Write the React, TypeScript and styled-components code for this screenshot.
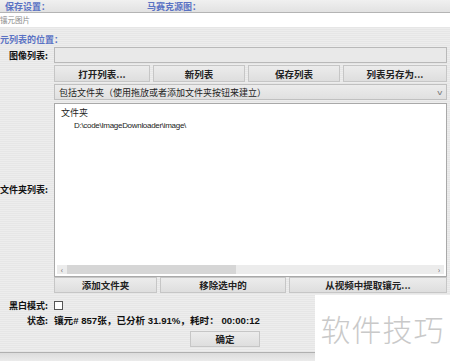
import React from 'react';
import styled, { createGlobalStyle } from 'styled-components';

const GlobalStyle = createGlobalStyle`
  html, body {
    margin: 0;
    padding: 0;
    width: 450px;
    height: 361px;
    overflow: hidden;
  }
  body {
    font-family: "Noto Sans CJK SC", "DejaVu Sans", sans-serif;
  }
  *, *::before, *::after {
    box-sizing: border-box;
  }
`;

const Page = styled.div`
  position: relative;
  width: 450px;
  height: 361px;
  display: flex;
  flex-direction: column;
  background: repeating-linear-gradient(#ededed 0 1px, #e6e6e6 1px 2px);
  overflow: hidden;

  & > * {
    flex-shrink: 0;
  }
`;

const TopBar = styled.div`
  height: 13px;
  display: flex;
  align-items: center;
  background: linear-gradient(#f0f0f0, #e2e2e2);
  border-bottom: 1px solid #b4b4b4;
`;

const BlueTitle = styled.span<{ $left?: number }>`
  color: #5a72c4;
  font-size: 9px;
  font-weight: 700;
  line-height: 11px;
  white-space: nowrap;
  margin-left: ${(p) => p.$left ?? 0}px;
`;

const WhiteBand = styled.div`
  height: 14px;
  background: #fff;
  display: flex;
  align-items: center;
`;

const Hint = styled.span`
  color: #8a8a8a;
  font-size: 7.5px;
  line-height: 10px;
  white-space: nowrap;
`;

const SectionRow = styled.div`
  height: 20px;
  display: flex;
  align-items: flex-end;
  padding-bottom: 2px;
`;

const Form = styled.div<{ $gap?: number; $top?: number }>`
  display: grid;
  grid-template-columns: 54px 1fr;
  padding-right: 3px;
  row-gap: ${(p) => p.$gap ?? 0}px;
  margin-top: ${(p) => p.$top ?? 0}px;
`;

const Label = styled.div`
  font-size: 9px;
  font-weight: 700;
  color: #111;
  padding-right: 6px;
  display: flex;
  align-items: center;
  justify-content: flex-end;
  white-space: nowrap;
`;

const Field = styled.div`
  height: 16px;
  background: #e9e9e9;
  border: 1px solid #b9b9b9;
`;

const ButtonRow = styled.div<{ $cols: string }>`
  display: grid;
  grid-template-columns: ${(p) => p.$cols};
  gap: 3px;
`;

const Button = styled.button<{ $h?: number }>`
  height: ${(p) => p.$h ?? 17}px;
  padding: 0;
  border: 1px solid #c6c6c6;
  background: linear-gradient(#ececec, #dedede);
  font-family: "Noto Sans CJK SC", sans-serif;
  font-size: 9.5px;
  font-weight: 700;
  color: #222;
  line-height: 14px;
`;

const Select = styled.div`
  height: 16px;
  display: flex;
  align-items: center;
  justify-content: space-between;
  padding: 0 4px;
  border: 1px solid #c0c0c0;
  background: linear-gradient(#ececec, #e0e0e0);
  font-size: 9px;
  color: #222;
`;

const Chevron = styled.span`
  font-size: 7px;
  color: #777;
  transform: scaleX(1.4);
`;

const ListBox = styled.div`
  height: 174px;
  margin-top: 1px;
  display: flex;
  flex-direction: column;
  background: #fff;
  border: 1px solid #a9a9a9;
`;

const ListBody = styled.div`
  flex: 1;
  padding: 2px 6px;
  color: #222;
`;

const ListItem = styled.div<{ $indent?: number }>`
  height: 13px;
  line-height: 13px;
  padding-left: ${(p) => p.$indent ?? 0}px;
  font-family: ${(p) => (p.$indent ? '"Liberation Sans", sans-serif' : 'inherit')};
  font-size: ${(p) => (p.$indent ? '8px' : '9px')};
  letter-spacing: ${(p) => (p.$indent ? '-0.3px' : '0')};
`;

const ScrollBar = styled.div`
  height: 9px;
  margin: 0 2px 2px 2px;
  display: grid;
  grid-template-columns: 10px 1fr 10px;
  align-items: center;
  background: #ececec;
  font-size: 8px;
  color: #666;
`;

const Track = styled.div`
  height: 9px;
  position: relative;
`;

const Thumb = styled.div`
  position: absolute;
  left: 0;
  top: 0;
  height: 9px;
  background: #d6d6d6;
`;

const Arrow = styled.span`
  text-align: center;
  line-height: 9px;
`;

const Cell = styled.div`
  height: 12px;
  display: flex;
  align-items: center;
`;

const CheckBox = styled.span`
  width: 9px;
  height: 9px;
  border: 1px solid #555;
  background: #fff;
  display: inline-block;
`;

const Status = styled(Cell)`
  font-family: "Liberation Sans", "Noto Sans CJK SC", sans-serif;
  font-size: 9.6px;
  font-weight: 700;
  color: #111;
  white-space: nowrap;
`;

const Footer = styled.div`
  display: flex;
  justify-content: center;
  margin-top: 4px;
`;

const OkButton = styled(Button)`
  width: 70px;
`;

const BottomBar = styled.div`
  margin-top: auto;
  height: 9px;
  border-top: 1px solid #b0b0b0;
  background: linear-gradient(#dcdcdc, #ebebeb);
`;

const Watermark = styled.div`
  position: absolute;
  right: 0;
  bottom: 0;
  width: 135px;
  height: 66px;
  background: #fff;
  display: flex;
  align-items: center;
  justify-content: center;
  color: #c9c9c9;
  font-size: 30px;
  font-weight: 300;
  letter-spacing: 1px;
`;

export default function App() {
  return (
    <>
      <GlobalStyle />
      <Page>
        <TopBar>
          <BlueTitle $left={5}>保存设置：</BlueTitle>
          <BlueTitle $left={97}>马赛克源图：</BlueTitle>
        </TopBar>
        <WhiteBand>
          <Hint>镶元图片</Hint>
        </WhiteBand>
        <SectionRow>
          <BlueTitle>元列表的位置：</BlueTitle>
        </SectionRow>
        <Form $gap={2}>
          <Label>图像列表:</Label>
          <Field />

          <div />
          <ButtonRow $cols="96px 92px 92px 1fr">
            <Button>打开列表...</Button>
            <Button>新列表</Button>
            <Button>保存列表</Button>
            <Button>列表另存为...</Button>
          </ButtonRow>

          <div />
          <Select>
            <span>包括文件夹（使用拖放或者添加文件夹按钮来建立）</span>
            <Chevron>v</Chevron>
          </Select>

          <Label>文件夹列表:</Label>
          <ListBox>
            <ListBody>
              <ListItem>文件夹</ListItem>
              <ListItem $indent={13}>D:\code\ImageDownloader\image\</ListItem>
            </ListBody>
            <ScrollBar>
              <Arrow>‹</Arrow>
              <Track>
                <Thumb style={{ width: '46%' }} />
              </Track>
              <Arrow>›</Arrow>
            </ScrollBar>
          </ListBox>

          <div />
          <ButtonRow $cols="103px 126px 1fr" style={{ marginTop: -2 }}>
            <Button $h={16}>添加文件夹</Button>
            <Button $h={16}>移除选中的</Button>
            <Button $h={16}>从视频中提取镶元...</Button>
          </ButtonRow>
        </Form>
        <Form $top={6} $gap={2}>
          <Label>黑白模式:</Label>
          <Cell>
            <CheckBox />
          </Cell>
          <Label>状态:</Label>
          <Status>镶元# 857张，已分析 31.91%，耗时： 00:00:12</Status>
        </Form>
        <Footer>
          <OkButton $h={16}>确定</OkButton>
        </Footer>
        <BottomBar />
        <Watermark>软件技巧</Watermark>
      </Page>
    </>
  );
}
